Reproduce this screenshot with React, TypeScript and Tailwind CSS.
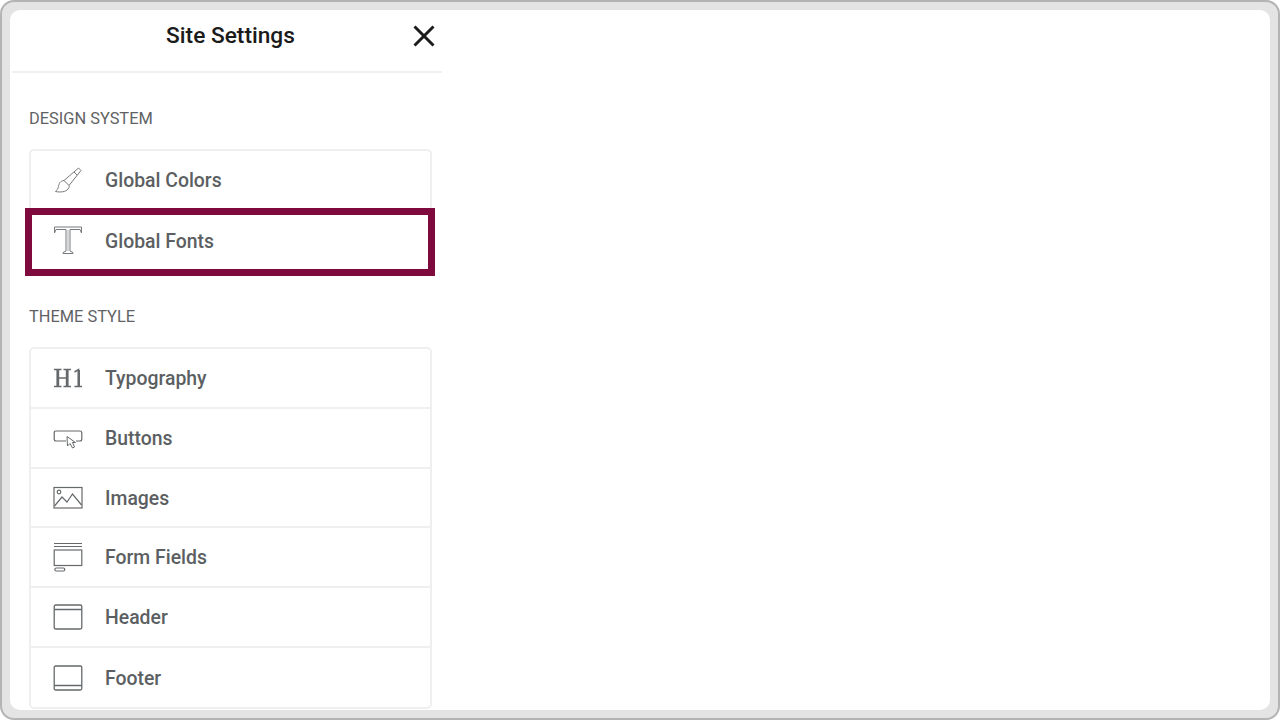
const rowText = "text-[19.4px] font-medium leading-none text-[#5c5f62]";

function Brush() {
  return (
    <svg width="30" height="30" viewBox="0 0 30 30" fill="none" stroke="#77797a" strokeWidth="1">
      <path d="M11 14.5 L25.5 2 L28 4.5 L16 19.5 Z" />
      <path d="M11 14.5 C7 15 6 17.5 5.5 20.5 C5 23 3.5 24.5 2.5 25.5 C7 26.5 13 26 15 23 C16.5 21 16.5 20 16 19.5" />
      <path d="M21 6 L24 9" />
    </svg>
  );
}
function TIcon() {
  return (
    <svg width="30" height="30" viewBox="0 0 30 30" fill="none" stroke="#77797a" strokeWidth="1">
      <path d="M1.5 1 H28.5 V7 L27 3.5 H17 V25 L20 26.5 V27.5 H10 V26.5 L13 25 V3.5 H3 L1.5 7 Z" />
      <path d="M15 4 V25" strokeOpacity="0.6" />
    </svg>
  );
}
function H1Icon() {
  return (
    <svg width="30" height="30" viewBox="0 0 30 30" fill="none" stroke="#66696b">
      <g strokeWidth="1.5">
        <path d="M1 6.5 H8.5 M1 23.5 H8.5 M10.5 6.5 H18 M10.5 23.5 H18" />
        <path d="M21.5 9 L25.5 6.5 V23.5 M21.5 23.5 H29" />
        <path d="M5 15 H14" />
      </g>
      <path d="M4.8 6.5 V23.5 M14.2 6.5 V23.5" strokeWidth="2.8" />
      <path d="M25.8 7 V23.5" strokeWidth="2.4" />
    </svg>
  );
}
function ButtonIcon() {
  return (
    <svg width="30" height="30" viewBox="0 0 30 30" fill="none" stroke="#66696b" strokeWidth="1.2">
      <path d="M13 18 H3 Q1.2 18 1.2 16 V10 Q1.2 8 3 8 H27 Q28.8 8 28.8 10 V16 Q28.8 18 27 18 H23" />
      <path d="M14 13.5 L14.5 23 L17 20.5 L19.5 25 L21.5 24 L19.5 19.5 L22.5 19.5 Z" strokeWidth="1" />
    </svg>
  );
}
function ImageIcon() {
  return (
    <svg width="30" height="30" viewBox="0 0 30 30" fill="none" stroke="#66696b" strokeWidth="1.2">
      <rect x="1" y="4.5" width="28" height="20.5" />
      <circle cx="6" cy="9" r="1.8" />
      <path d="M1.5 23 L9 14 L14 19 L19.5 11 L28.5 22" />
    </svg>
  );
}
function FormIcon() {
  return (
    <svg width="30" height="30" viewBox="0 0 30 30" fill="none" stroke="#66696b" strokeWidth="1.2">
      <path d="M1 1.5 H29 M1 4.5 H29" />
      <rect x="1.2" y="8" width="27.6" height="15.5" />
      <rect x="1.8" y="26" width="10" height="3" rx="1.5" />
    </svg>
  );
}
function HeaderIcon() {
  return (
    <svg width="30" height="30" viewBox="0 0 30 30" fill="none" stroke="#66696b" strokeWidth="1.3">
      <rect x="1.2" y="3" width="27.6" height="24" rx="1.5" />
      <path d="M1.2 7.5 H28.8" />
    </svg>
  );
}
function FooterIcon() {
  return (
    <svg width="30" height="30" viewBox="0 0 30 30" fill="none" stroke="#66696b" strokeWidth="1.3">
      <rect x="1.2" y="3" width="27.6" height="24" rx="1.5" />
      <path d="M1.2 22.5 H28.8" />
    </svg>
  );
}

function Row({ icon, label, h, last, low, children }: { icon: React.ReactNode; label: string; h: string; last?: boolean; low?: boolean; children?: React.ReactNode }) {
  return (
    <div className={`relative flex items-center ${h} ${last ? "" : "border-b-2 border-[#efefef]"}`}>
      <div className="ml-[22px] mr-[22px] flex h-[30px] w-[30px] shrink-0 items-center justify-center">{icon}</div>
      <span className={`${rowText} ${low ? "pt-[2px]" : ""}`}>{label}</span>
      {children}
    </div>
  );
}

export default function App() {
  return (
    <div className="h-[720px] w-[1280px] bg-white" style={{ fontFamily: "Roboto, sans-serif" }}>
      <div className="h-full w-full rounded-[14px] border-2 border-[#b4b4b4] bg-[#e4e4e4] p-2">
        <div className="h-full w-full overflow-hidden rounded-[10px] bg-white pl-[2px]">
          <div className="w-[430px]">
            <header className="relative flex h-[63px] items-center justify-center border-b-2 border-[#efefef] pb-[9px] pl-[7px]">
              <h1 className="text-[22.7px] font-medium leading-none text-[#1b1b1b]">Site Settings</h1>
              <svg className="absolute right-[5px] top-[13px]" width="26" height="26" viewBox="0 0 26 26" fill="none" stroke="#1c1c1c" strokeWidth="3">
                <path d="M3.5 3.5 L22.5 22.5 M22.5 3.5 L3.5 22.5" />
              </svg>
            </header>

            <div className="pl-[17px] pr-[10px]">
              <h2 className="mt-[36px] text-[16.4px] leading-[20px] text-[#5f6265]">DESIGN SYSTEM</h2>
              <div className="mt-[20px] rounded-t-[5px] border-2 border-b-0 border-[#efefef]">
                <Row icon={<Brush />} label="Global Colors" h="h-[59px]" last />
                <Row icon={<TIcon />} label="Global Fonts" h="h-[62px]" last low>
                  <div className="absolute -left-[6px] -right-[5px] bottom-[-4px] top-[-2px] border-[7px] border-[#7f0a3d]" />
                </Row>
              </div>

              <h2 className="mt-[35px] text-[16.4px] leading-[20px] text-[#5f6265]">THEME STYLE</h2>
              <div className="mt-[20px] rounded-[5px] border-2 border-[#efefef]">
                <Row icon={<H1Icon />} label="Typography" h="h-[60px]" low />
                <Row icon={<ButtonIcon />} label="Buttons" h="h-[60px]" low />
                <Row icon={<ImageIcon />} label="Images" h="h-[59px]" low />
                <Row icon={<FormIcon />} label="Form Fields" h="h-[60px]" low />
                <Row icon={<HeaderIcon />} label="Header" h="h-[60px]" low />
                <Row icon={<FooterIcon />} label="Footer" h="h-[59px]" last low />
              </div>
            </div>
          </div>
        </div>
      </div>
    </div>
  );
}
